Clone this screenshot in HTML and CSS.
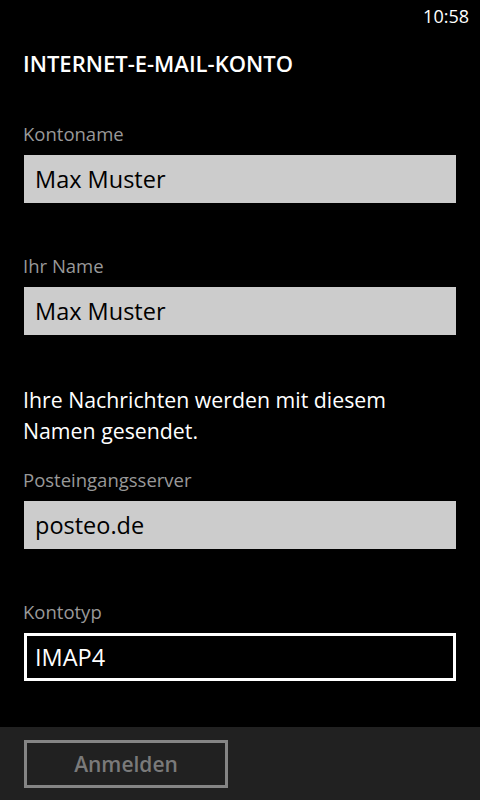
FILE: index.html
```html
<!DOCTYPE html>
<html lang="de">
<head>
    <meta charset="UTF-8">
    <meta name="viewport" content="width=device-width, initial-scale=1.0">
    <title>Internet-E-Mail-Konto</title>
    <link rel="stylesheet" href="styles.css">
</head>
<body>
    <div class="phone">
        <div class="status-bar">
            <span class="clock">10:58</span>
        </div>

        <div class="content">
            <h1 class="page-title">INTERNET-E-MAIL-KONTO</h1>

            <div class="field">
                <label class="field-label">Kontoname</label>
                <div class="text-box">Max Muster</div>
            </div>

            <div class="field">
                <label class="field-label">Ihr Name</label>
                <div class="text-box">Max Muster</div>
            </div>

            <p class="hint">Ihre Nachrichten werden mit diesem Namen gesendet.</p>

            <div class="field">
                <label class="field-label">Posteingangsserver</label>
                <div class="text-box">posteo.de</div>
            </div>

            <div class="field">
                <label class="field-label">Kontotyp</label>
                <div class="text-box picker">IMAP4</div>
            </div>
        </div>

        <div class="app-bar">
            <button class="app-button" disabled>Anmelden</button>
        </div>
    </div>
</body>
</html>
```

FILE: styles.css
```css
body {
    margin: 0;
    background: #000;
    color: #fff;
    font-family: 'Open Sans', 'Noto Sans', sans-serif;
}
.phone {
    width: 480px;
    height: 800px;
    display: flex;
    flex-direction: column;
    overflow: hidden;
}
.status-bar {
    height: 32px;
    display: flex;
    justify-content: flex-end;
    align-items: center;
    padding-right: 11px;
}
.clock {
    font-size: 18px;
}
.content {
    flex: 1;
    padding: 0 24px 0 24px;
}
.page-title {
    margin: 17px 0 0 -1px;
    font-size: 22px;
    font-weight: 600;
    line-height: 28px;
}
.field {
    margin-top: 50px;
}
.page-title + .field {
    margin-top: 44px;
}
.hint + .field {
    margin-top: 21px;
}
.field-label {
    display: block;
    color: #999;
    font-size: 18.5px;
    line-height: 26px;
    margin-left: -1px;
}
.text-box {
    margin-top: 8px;
    height: 48px;
    box-sizing: border-box;
    background: #ccc;
    color: #000;
    font-size: 23.5px;
    line-height: 48px;
    padding: 0 11px;
}
.picker {
    background: #000;
    color: #fff;
    border: 3px solid #fff;
    line-height: 42px;
    padding: 0 8px;
}
.hint {
    margin: 49px 0 0 -1px;
    font-size: 21.3px;
    line-height: 31px;
}
.app-bar {
    height: 73px;
    background: #212121;
    padding: 13px 24px 0;
    box-sizing: border-box;
}
.app-button {
    width: 204px;
    height: 48px;
    background: transparent;
    border: 3px solid #858585;
    color: #7a7a7a;
    font-family: inherit;
    font-size: 21px;
    font-weight: 600;
    padding: 0;
}
```
